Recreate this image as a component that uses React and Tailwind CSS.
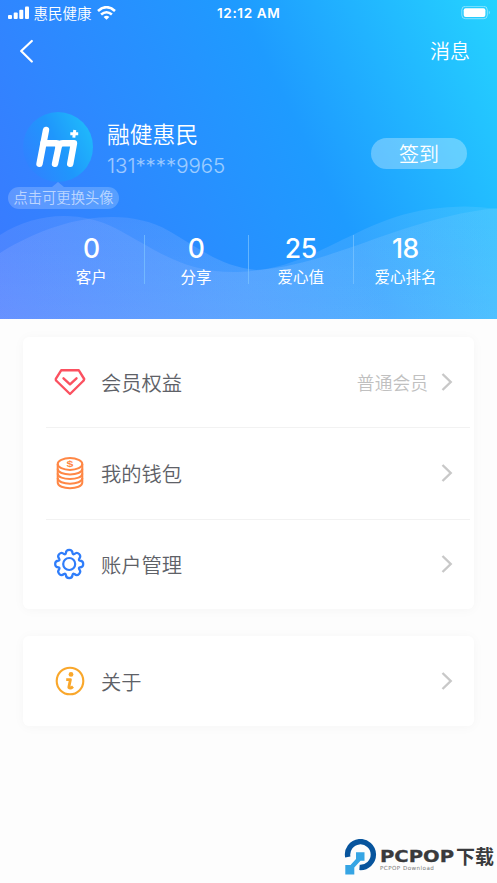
import React from 'react';

function Chevron() {
  return (
    <svg className="h-[20px] w-[12px]" viewBox="0 0 12 20" fill="none" stroke="#c8c8c8" strokeWidth="2.4">
      <path d="M1.5 2 L9.7 10 L1.5 18" />
    </svg>
  );
}

function DiamondIcon() {
  return (
    <svg className="h-[32px] w-[34px]" viewBox="0 0 34 32" fill="none" stroke="#fb5160" strokeWidth="2.4" strokeLinejoin="round" strokeLinecap="round">
      <path d="M8.3 4.2 H25.7 L31.2 13 Q31 14.3 30.2 15 L17 28 L3.6 15 Q2.4 13.9 2.8 12.8 Z" />
      <path d="M10.5 12.3 L17 18.3 L23.5 12.3" />
    </svg>
  );
}

function CoinsIcon() {
  return (
    <svg className="h-[34px] w-[34px]" viewBox="0 0 34 34" fill="none" stroke="#ff8745" strokeWidth="2">
      <ellipse cx="17" cy="8" rx="12.3" ry="5.9" />
      <path d="M4.7 8 V26.5 C4.7 34 29.3 34 29.3 26.5 V8" />
      <path d="M4.7 12.8 C4.7 20.3 29.3 20.3 29.3 12.8 M4.7 17.4 C4.7 24.9 29.3 24.9 29.3 17.4 M4.7 22 C4.7 29.5 29.3 29.5 29.3 22" />
      <text x="17" y="11.2" textAnchor="middle" fill="#ff8745" stroke="none" fontSize="9.5" fontWeight="700" fontFamily="Liberation Sans, sans-serif" transform="translate(-5.1 0) scale(1.3 1)">$</text>
    </svg>
  );
}

function GearIcon() {
  return (
    <svg className="h-[34px] w-[34px]" viewBox="-16.2 -17 34 34" fill="none" stroke="#2f7dfa" strokeWidth="2.2" strokeLinejoin="round">
      <circle r="6" />
      <path d="M-3.4 -10.6 C-3.2 -15.2 3.2 -15.2 3.4 -10.6 Q3.8 -9.3 5.1 -9.9 C8.5 -13 13 -8.5 9.9 -5.1 Q9.3 -3.8 10.6 -3.4 C15.2 -3.2 15.2 3.2 10.6 3.4 Q9.3 3.8 9.9 5.1 C13 8.5 8.5 13 5.1 9.9 Q3.8 9.3 3.4 10.6 C3.2 15.2 -3.2 15.2 -3.4 10.6 Q-3.8 9.3 -5.1 9.9 C-8.5 13 -13 8.5 -9.9 5.1 Q-9.3 3.8 -10.6 3.4 C-15.2 3.2 -15.2 -3.2 -10.6 -3.4 Q-9.3 -3.8 -9.9 -5.1 C-13 -8.5 -8.5 -13 -5.1 -9.9 Q-3.8 -9.3 -3.4 -10.6 Z" />
    </svg>
  );
}

function InfoIcon() {
  return (
    <svg className="h-[34px] w-[34px]" viewBox="0 0 34 34" fill="none" stroke="#f9a72b">
      <circle cx="17" cy="17" r="13.3" strokeWidth="2.1" />
      <circle cx="18" cy="10.4" r="2.4" fill="#f9a72b" stroke="none" />
      <path d="M13.2 15.6 H17.4 L15.8 23.4 Q17.4 25 20 22.6" strokeWidth="2.8" strokeLinejoin="round" />
    </svg>
  );
}

function Row({ icon, label, note }) {
  return (
    <div className="flex h-[91px] items-center pb-px pl-[30px] pr-[21px]">
      <div className="flex w-[34px] justify-center">{icon}</div>
      <span className="ml-[14px] flex-1 text-[20.3px] font-[350] text-[#5e6167]">{label}</span>
      {note && <span className="mr-[13px] text-[17.8px] font-[350] text-[#c0c0c0]">{note}</span>}
      <Chevron />
    </div>
  );
}

function Stat({ value, label }) {
  return (
    <div className="flex w-[104.7px] flex-col items-center">
      <span className="font-['Inter'] text-[26.5px] leading-[28px] font-[450] tracking-[-0.5px]">{value}</span>
      <span className="mt-[3px] text-[15.5px] leading-[22px]">{label}</span>
    </div>
  );
}

function Waves() {
  return (
    <svg className="absolute inset-0 h-full w-full" viewBox="0 0 497 319" preserveAspectRatio="none">
      <defs>
        <linearGradient id="wave" x1="0" y1="319" x2="497" y2="319" gradientUnits="userSpaceOnUse">
          <stop offset="0" stopColor="#b6bbff" stopOpacity="0.15" />
          <stop offset="0.5" stopColor="#b6cdff" stopOpacity="0.16" />
          <stop offset="1" stopColor="#c4e6ff" stopOpacity="0.11" />
        </linearGradient>
        <linearGradient id="lift" x1="0" y1="215" x2="0" y2="319" gradientUnits="userSpaceOnUse">
          <stop offset="0" stopColor="#fff" stopOpacity="0" />
          <stop offset="1" stopColor="#fff" stopOpacity="0.06" />
        </linearGradient>
      </defs>
      <path d="M0 235 C35 212 80 210 115 228 C158 251 184 273 238 272 C315 270 354 220 430 209 Q466 204 497 209 V319 H0 Z" fill="url(#wave)" />
      <path d="M0 253 C58 217 124 205 169 231 C202 250 220 266 256 270 C331 266 400 218 497 208 V319 H0 Z" fill="url(#wave)" />
      <path d="M0 253 C58 217 124 205 169 231 C202 250 220 266 256 270 C331 266 400 218 497 208 V319 H0 Z" fill="url(#lift)" />
    </svg>
  );
}

function StatusBar() {
  return (
    <div className="flex h-[26px] items-center pl-2 pr-[6px]">
      <div className="flex w-[209px] items-center">
        <svg className="h-[14px] w-[22px]" viewBox="0 0 22 14" fill="#fff">
          <rect x="0" y="9" width="4" height="4" rx="1" />
          <rect x="5.7" y="6.5" width="4" height="6.5" rx="1" />
          <rect x="11.3" y="3.7" width="4" height="9.3" rx="1" />
          <rect x="17" y="0.5" width="4" height="12.5" rx="1" />
        </svg>
        <span className="ml-[3.5px] text-[14.5px] leading-5 font-[350]">惠民健康</span>
        <svg className="ml-[5.5px] h-[14px] w-[19px]" viewBox="0 0 19 14" fill="none" stroke="#fff" strokeWidth="2.6">
          <path d="M1 5 Q9.5 -2.6 18 5" />
          <path d="M4.1 8.6 Q9.5 3.9 14.9 8.6" />
          <path d="M6.6 10.9 Q9.5 8.5 12.4 10.9 L9.5 13.8 Z" fill="#fff" stroke="none" />
        </svg>
      </div>
      <span className="font-['Inter'] text-[13.6px] leading-5 font-semibold tracking-[0.6px]">12:12 AM</span>
      <svg className="ml-auto h-[14px] w-[30px]" viewBox="0 0 30 14" fill="none">
        <rect x="0.8" y="0.3" width="25.5" height="12.4" rx="3.6" stroke="#fff" strokeOpacity="0.45" />
        <rect x="2.7" y="2.2" width="21.7" height="8.7" rx="2" fill="#fff" />
        <path d="M27.8 4.5 Q29.8 6.5 27.8 8.5 Z" fill="#fff" fillOpacity="0.5" />
      </svg>
    </div>
  );
}

function Avatar() {
  return (
    <svg className="h-[70px] w-[70px]" viewBox="0 0 70 70">
      <defs>
        <linearGradient id="avatar" x1="0.05" y1="0.7" x2="0.95" y2="0.25">
          <stop offset="0" stopColor="#2f83ff" />
          <stop offset="0.5" stopColor="#1f97fc" />
          <stop offset="1" stopColor="#1fb8fb" />
        </linearGradient>
      </defs>
      <circle cx="35" cy="35" r="35" fill="url(#avatar)" />
      <g fill="none" stroke="#fff" strokeLinejoin="round" strokeLinecap="round">
        <path d="M23 18 L16.5 51.8" strokeWidth="6.4" />
        <path d="M20.5 31.2 H33.5 Q36.3 31.2 35.8 34 L32 51.8" strokeWidth="6.4" />
        <path d="M35.5 34 Q37 31.2 40 31.2 H51 L47.2 51.8" strokeWidth="6.4" />
        <path d="M51.8 18 L50.8 25.6 M47.3 21.8 H55.2" strokeWidth="3" strokeLinecap="butt" />
      </g>
    </svg>
  );
}

function Watermark() {
  return (
    <div className="absolute bottom-[6px] left-[344px] flex items-end">
      <svg className="h-[38px] w-[34px]" viewBox="0 0 34 38">
        <path d="M3.8 18 A12.9 12.9 0 1 1 15.5 28.4" fill="none" stroke="#07549d" strokeWidth="5.4" />
        <path d="M12 13.3 H20.5 V21.7 H16.5 L10.3 28.5 V35.5 H1.3 V26 H6.5 L12 20 Z" fill="#36a5e4" />
      </svg>
      <div className="mb-[5px] ml-[2px] flex w-[115px] flex-col">
        <div className="flex items-center whitespace-nowrap text-[#393a3c]">
          <svg className="h-[20px] w-[76px] overflow-visible" viewBox="0 0 76 20">
            <text x="0" y="16" fill="#393a3c" stroke="#393a3c" strokeWidth="0.3" textLength="74" lengthAdjust="spacingAndGlyphs" fontSize="16" fontWeight="700" fontFamily="DejaVu Sans, sans-serif">PCPOP</text>
          </svg>
          <span className="text-[19px] leading-[20px] font-bold">下载</span>
        </div>
        <span className="-mt-px font-['DejaVu_Sans'] text-[5.6px] leading-[7px] tracking-[0.45px] text-[#777]">PCPOP Download</span>
      </div>
    </div>
  );
}

export default function App() {
  return (
    <div className="relative h-[883px] w-[497px] overflow-hidden bg-[#fdfdfd] font-['Noto_Sans_CJK_SC','Noto_Sans',sans-serif]">
      <header className="relative h-[319px] bg-[linear-gradient(64deg,#3b78ff_0%,#1e9bff_60%,#25d3ff_100%)] text-white">
        <Waves />
        <div className="relative">
          <StatusBar />
          <div className="flex h-[50px] items-center justify-between pl-[19px] pr-[27px]">
            <svg className="h-[24px] w-[15px]" viewBox="0 0 15 24" fill="none" stroke="#fff" strokeWidth="2.2" strokeLinecap="round" strokeLinejoin="round">
              <path d="M12.8 2 L2.2 12 L12.8 22.5" />
            </svg>
            <span className="text-[20px] font-[350]">消息</span>
          </div>

          <div className="mt-[36px] flex h-[75px] items-start pl-[23px] pr-[30px]">
            <Avatar />
            <div className="ml-[14px] flex-1">
              <div className="mt-[8px] text-[22.8px] leading-[28px] font-[350]">融健惠民</div>
              <div className="mt-[5px] font-['Inter'] text-[20.5px] leading-[26px] font-light tracking-[-0.05px] text-white/55">131****9965</div>
            </div>
            <div className="mt-[26px] flex h-[31px] w-[96px] items-center justify-center rounded-full bg-white/30 text-[20px] font-[350]">签到</div>
          </div>

          <div className="ml-2 h-[22px] w-[111px] rounded-full bg-white/20 text-center text-[14.3px] leading-[19px] font-[350] text-white/60">
            <div className="absolute -mt-[5px] ml-[44px] h-0 w-0 border-x-[6px] border-b-[5px] border-x-transparent border-b-white/20" />
            点击可更换头像
          </div>

          <div className="mt-[25px] flex items-center pl-[39px]">
            <Stat value="0" label="客户" />
            <div className="-mr-px -mt-[3px] h-[49px] w-px bg-[#7dc4ff]/70" />
            <Stat value="0" label="分享" />
            <div className="-mr-px -mt-[3px] h-[49px] w-px bg-[#7dc4ff]/70" />
            <Stat value="25" label="爱心值" />
            <div className="-mr-px -mt-[3px] h-[49px] w-px bg-[#7dc4ff]/70" />
            <Stat value="18" label="爱心排名" />
          </div>
        </div>
      </header>

      <main className="flex flex-col gap-[27px] px-[23px] pt-[18px]">
        <section className="h-[272px] rounded-[6px] bg-white shadow-[0_1px_12px_rgba(0,0,0,0.035)]">
          <Row icon={<DiamondIcon />} label="会员权益" note="普通会员" />
          <div className="-mt-px ml-[23px] mr-[4px] h-px bg-[#f2f2f2]" />
          <Row icon={<CoinsIcon />} label="我的钱包" />
          <div className="-mb-px ml-[23px] mr-[4px] h-px bg-[#f2f2f2]" />
          <Row icon={<GearIcon />} label="账户管理" />
        </section>
        <section className="h-[90px] rounded-[6px] bg-white shadow-[0_1px_12px_rgba(0,0,0,0.035)]">
          <Row icon={<InfoIcon />} label="关于" />
        </section>
      </main>
      <Watermark />
    </div>
  );
}
